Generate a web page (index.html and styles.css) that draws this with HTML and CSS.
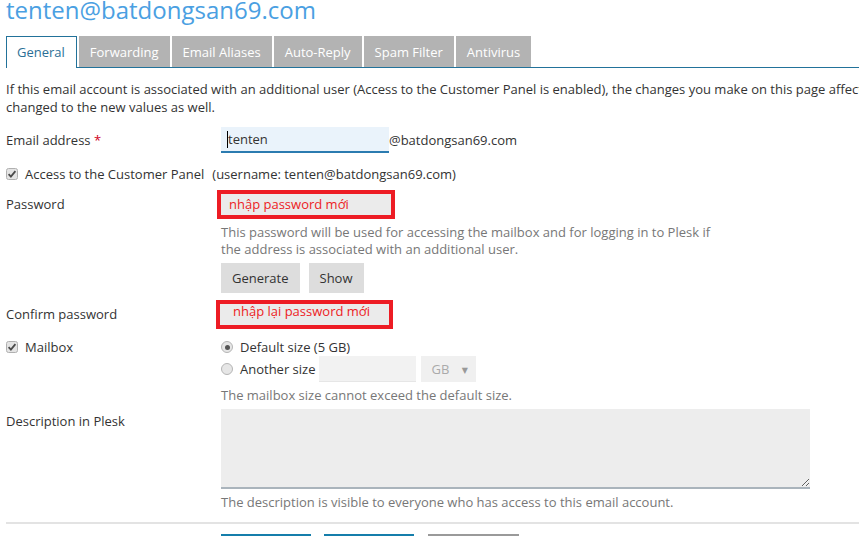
FILE: index.html
```html
<!DOCTYPE html>
<html lang="en">
<head>
    <meta charset="UTF-8">
    <meta name="viewport" content="width=device-width, initial-scale=1.0">
    <title>tenten@batdongsan69.com</title>
    <link rel="stylesheet" href="styles.css">
</head>
<body>
    <div class="page">
        <h1 class="title">tenten@batdongsan69.com</h1>

        <div class="tabs">
            <div class="tab active">General</div>
            <div class="tab">Forwarding</div>
            <div class="tab">Email Aliases</div>
            <div class="tab">Auto-Reply</div>
            <div class="tab">Spam Filter</div>
            <div class="tab">Antivirus</div>
        </div>

        <p class="intro">If this email account is associated with an additional user (Access to the Customer Panel is enabled), the changes you make on this page affect the user's settings: the user's email address and password will be<br>changed to the new values as well.</p>

        <div class="form-row row-email">
            <div class="label">Email address <span class="req">*</span></div>
            <div class="field inline">
                <div class="email-input"><span class="caret"></span>tenten</div>
                <span>@batdongsan69.com</span>
            </div>
        </div>

        <div class="check-row row-access">
            <svg class="checkbox" width="12" height="12" viewBox="0 0 12 12">
                <rect x="0.5" y="0.5" width="11" height="11" rx="2" fill="#e4e4e4" stroke="#b0b0b0"/>
                <path d="M2.6 6.2 L4.9 8.6 L9.4 3.2" fill="none" stroke="#4a4a4a" stroke-width="1.8"/>
            </svg>
            <span>Access to the Customer Panel</span>
            <span class="username">(username: tenten@batdongsan69.com)</span>
        </div>

        <div class="form-row row-pass">
            <div class="label">Password</div>
            <div class="field">
                <div class="pw-box">nhập password mới</div>
            </div>
        </div>
        <div class="form-row">
            <div></div>
            <div class="field">
                <div class="help help-pass">This password will be used for accessing the mailbox and for logging in to Plesk if the address is associated with an additional user.</div>
                <div class="btns">
                    <div class="btn">Generate</div>
                    <div class="btn">Show</div>
                </div>
            </div>
        </div>

        <div class="form-row row-confirm">
            <div class="label confirm-label">Confirm password</div>
            <div class="field">
                <div class="pw-box confirm">nhập lại password mới</div>
            </div>
        </div>

        <div class="form-row row-mailbox">
            <div class="check-row">
                <svg class="checkbox" width="12" height="12" viewBox="0 0 12 12">
                    <rect x="0.5" y="0.5" width="11" height="11" rx="2" fill="#e4e4e4" stroke="#b0b0b0"/>
                    <path d="M2.6 6.2 L4.9 8.6 L9.4 3.2" fill="none" stroke="#4a4a4a" stroke-width="1.8"/>
                </svg>
                <span>Mailbox</span>
            </div>
            <div class="field">
                <div class="radio-line">
                    <span class="radio checked"></span>
                    <span>Default size (5 GB)</span>
                </div>
                <div class="radio-line tall">
                    <span class="radio"></span>
                    <span>Another size</span>
                    <div class="size-input"></div>
                    <div class="size-select">GB <span class="arrow">&#9660;</span></div>
                </div>
                <div class="help help-mail">The mailbox size cannot exceed the default size.</div>
            </div>
        </div>

        <div class="form-row row-desc">
            <div class="label desc-label">Description in Plesk</div>
            <div class="field">
                <textarea class="desc"></textarea>
                <div class="help help-desc">The description is visible to everyone who has access to this email account.</div>
            </div>
        </div>

        <div class="divider"></div>

        <div class="form-row">
            <div></div>
            <div class="footer-btns">
                <div class="fbtn blue"></div>
                <div class="fbtn blue"></div>
                <div class="fbtn grey"></div>
            </div>
        </div>
    </div>
</body>
</html>
```

FILE: styles.css
```css
body {
    margin: 0;
    font-family: "Open Sans", "DejaVu Sans", sans-serif;
    font-size: 13px;
    line-height: 18px;
    color: #333;
    overflow: hidden;
}

.page {
    padding: 0 6px;
    width: 1100px;
}

.title {
    margin: -4px 0 12px;
    font-size: 24px;
    line-height: 28px;
    font-weight: 400;
    color: #4aa0e2;
}

/* tabs */
.tabs {
    display: flex;
    gap: 2px;
    height: 31px;
    border-bottom: 1px solid #22729a;
}
.tab {
    padding: 7px 11px 6px;
    background-color: #b3b3b3;
    color: #fff;
}
.tab.active {
    background-color: #fff;
    color: #2b6f96;
    border: 1px solid #22729a;
    border-bottom: none;
    padding: 6px 11px 7px 10px;
    margin-bottom: -1px;
}

.intro {
    margin: 12px 0 0;
    white-space: nowrap;
}

/* form rows */
.form-row {
    display: grid;
    grid-template-columns: 215px 1fr;
    align-items: center;
}
.req {
    color: #d0021b;
}
.inline {
    display: flex;
    align-items: center;
}

.row-email {
    margin-top: 11px;
}
.email-input {
    box-sizing: border-box;
    width: 168px;
    height: 26px;
    padding-left: 6px;
    line-height: 24px;
    background-color: #eaf3fb;
    border-bottom: 2px solid #2b7bb0;
}
.caret {
    display: inline-block;
    width: 1px;
    height: 17px;
    background-color: #000;
    vertical-align: -4px;
}

.check-row {
    display: flex;
    align-items: center;
    height: 18px;
}
.checkbox {
    margin-right: 7px;
    flex: none;
}
.row-access {
    margin-top: 12px;
}
.username {
    margin-left: 8px;
}

.row-pass {
    margin-top: 7px;
}
.row-pass .label {
    margin-top: -1px;
}
.pw-box {
    box-sizing: border-box;
    width: 178px;
    height: 29px;
    margin-left: -4px;
    padding-left: 8px;
    border: 4px solid #ed1c24;
    background-color: #ebebeb;
    color: #ed1c24;
    line-height: 21px;
}
.pw-box.confirm {
    width: 177px;
    margin-left: -5px;
    padding-left: 13px;
    line-height: 14px;
}

.help {
    color: #777;
    line-height: 17px;
}
.help-pass {
    margin-top: 5px;
    max-width: 500px;
}
.btns {
    display: flex;
    gap: 9px;
    margin-top: 5px;
}
.btn {
    height: 30px;
    padding: 0 11px;
    line-height: 30px;
    background-color: #ddd;
}

.row-confirm {
    margin-top: 7px;
}
.confirm-label {
    margin-top: -2px;
}

.row-mailbox {
    margin-top: 9px;
    align-items: start;
}
.radio-line {
    display: flex;
    align-items: center;
    height: 18px;
}
.radio-line.tall {
    height: 26px;
}
.radio {
    box-sizing: border-box;
    width: 12px;
    height: 12px;
    margin-right: 7px;
    border: 1px solid #b5b5b5;
    border-radius: 50%;
    background-color: #e6e6e6;
    position: relative;
}
.radio.checked::after {
    content: "";
    position: absolute;
    left: 2.5px;
    top: 2.5px;
    width: 5px;
    height: 5px;
    border-radius: 50%;
    background-color: #555;
}
.size-input {
    width: 97px;
    height: 25px;
    margin-left: 4px;
    background-color: #f2f2f2;
    border-bottom: 1px solid #e6e6e6;
}
.size-select {
    box-sizing: border-box;
    width: 55px;
    height: 26px;
    margin-left: 5px;
    padding-left: 10px;
    line-height: 26px;
    background-color: #f0f0f0;
    color: #aaa;
}
.arrow {
    font-size: 8px;
    margin-left: 9px;
    color: #999;
    vertical-align: 1px;
}
.help-mail {
    margin-top: 5px;
}

.row-desc {
    margin-top: 5px;
    align-items: start;
}
.desc-label {
    padding-top: 3px;
}
.desc {
    display: block;
    box-sizing: border-box;
    width: 589px;
    height: 80px;
    margin: 0;
    border: none;
    border-bottom: 2px solid #aab4bc;
    background-color: #ededed;
}
.help-desc {
    margin-top: 5px;
}

.divider {
    margin-top: 11px;
    height: 2px;
    background-color: #e3e3e3;
}

.footer-btns {
    display: flex;
    margin-top: 10px;
}
.fbtn {
    width: 90px;
    height: 30px;
    margin-right: 13px;
}
.fbtn.blue {
    background-color: #157eab;
}
.fbtn.grey {
    width: 91px;
    margin-left: 1px;
    background-color: #9a9a9a;
}
```
